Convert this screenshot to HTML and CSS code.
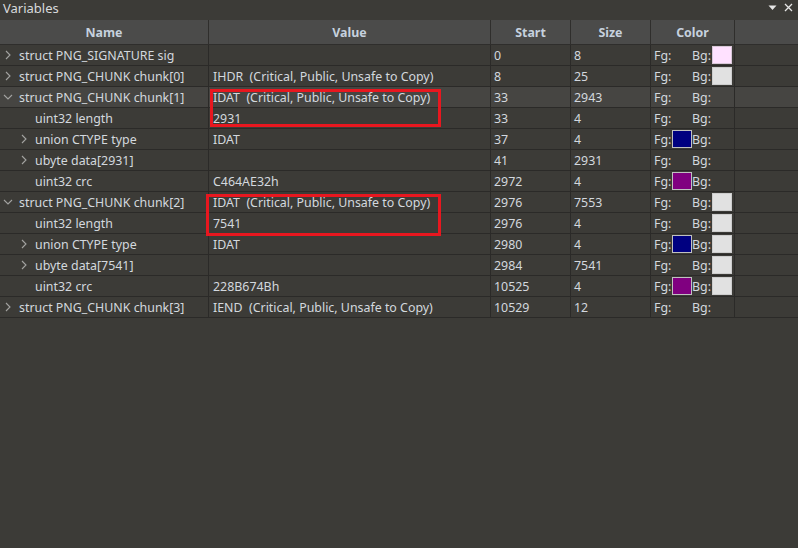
FILE: index.html
```html
<!DOCTYPE html>
<html>
<head>
<meta charset="utf-8">
<link rel="stylesheet" href="styles.css">
</head>
<body>
<div class="panel">
  <div class="titlebar">
    <span class="title">Variables</span>
    <span class="tools">
      <svg class="ico" width="9" height="9" viewBox="0 0 9 9"><path d="M0.5 2.5 L8.5 2.5 L4.5 7 Z" fill="#e6e6e6"/></svg>
      <svg class="ico" width="9" height="9" viewBox="0 0 9 9"><path d="M1 1 L8 8 M8 1 L1 8" stroke="#e6e6e6" stroke-width="1.3"/></svg>
    </span>
  </div>
  <div class="grid">
    <div class="row head">
      <div class="c name">Name</div><div class="c value">Value</div><div class="c start">Start</div><div class="c size">Size</div><div class="c color">Color</div><div class="c rest"></div>
    </div>
    <div class="row">
      <div class="c name l0"><svg class="chev" viewBox="0 0 10 10"><path d="M3 1 L7 5 L3 9"/></svg>struct PNG_SIGNATURE sig</div><div class="c value"></div><div class="c start">0</div><div class="c size">8</div><div class="c color"><span class="lab">Fg:</span><i class="slot"></i><span class="lab">Bg:</span><i class="slot sw pink"></i></div><div class="c rest"></div>
    </div>
    <div class="row">
      <div class="c name l0"><svg class="chev" viewBox="0 0 10 10"><path d="M3 1 L7 5 L3 9"/></svg>struct PNG_CHUNK chunk[0]</div><div class="c value">IHDR&nbsp; (Critical, Public, Unsafe to Copy)</div><div class="c start">8</div><div class="c size">25</div><div class="c color"><span class="lab">Fg:</span><i class="slot"></i><span class="lab">Bg:</span><i class="slot sw grey"></i></div><div class="c rest"></div>
    </div>
    <div class="row sel">
      <div class="c name l0"><svg class="chev" viewBox="0 0 10 10"><path d="M1 3 L5 7 L9 3"/></svg>struct PNG_CHUNK chunk[1]</div><div class="c value">IDAT&nbsp; (Critical, Public, Unsafe to Copy)</div><div class="c start">33</div><div class="c size">2943</div><div class="c color"><span class="lab">Fg:</span><i class="slot"></i><span class="lab">Bg:</span><i class="slot"></i></div><div class="c rest"></div>
    </div>
    <div class="row">
      <div class="c name l1"><span class="nochev"></span>uint32 length</div><div class="c value">2931</div><div class="c start">33</div><div class="c size">4</div><div class="c color"><span class="lab">Fg:</span><i class="slot"></i><span class="lab">Bg:</span><i class="slot"></i></div><div class="c rest"></div>
    </div>
    <div class="row">
      <div class="c name l1"><svg class="chev" viewBox="0 0 10 10"><path d="M3 1 L7 5 L3 9"/></svg>union CTYPE type</div><div class="c value">IDAT</div><div class="c start">37</div><div class="c size">4</div><div class="c color"><span class="lab">Fg:</span><i class="slot sw navy"></i><span class="lab">Bg:</span><i class="slot"></i></div><div class="c rest"></div>
    </div>
    <div class="row">
      <div class="c name l1"><svg class="chev" viewBox="0 0 10 10"><path d="M3 1 L7 5 L3 9"/></svg>ubyte data[2931]</div><div class="c value"></div><div class="c start">41</div><div class="c size">2931</div><div class="c color"><span class="lab">Fg:</span><i class="slot"></i><span class="lab">Bg:</span><i class="slot"></i></div><div class="c rest"></div>
    </div>
    <div class="row">
      <div class="c name l1"><span class="nochev"></span>uint32 crc</div><div class="c value">C464AE32h</div><div class="c start">2972</div><div class="c size">4</div><div class="c color"><span class="lab">Fg:</span><i class="slot sw purple"></i><span class="lab">Bg:</span><i class="slot"></i></div><div class="c rest"></div>
    </div>
    <div class="row">
      <div class="c name l0"><svg class="chev" viewBox="0 0 10 10"><path d="M1 3 L5 7 L9 3"/></svg>struct PNG_CHUNK chunk[2]</div><div class="c value">IDAT&nbsp; (Critical, Public, Unsafe to Copy)</div><div class="c start">2976</div><div class="c size">7553</div><div class="c color"><span class="lab">Fg:</span><i class="slot"></i><span class="lab">Bg:</span><i class="slot sw grey"></i></div><div class="c rest"></div>
    </div>
    <div class="row">
      <div class="c name l1"><span class="nochev"></span>uint32 length</div><div class="c value">7541</div><div class="c start">2976</div><div class="c size">4</div><div class="c color"><span class="lab">Fg:</span><i class="slot"></i><span class="lab">Bg:</span><i class="slot sw grey"></i></div><div class="c rest"></div>
    </div>
    <div class="row">
      <div class="c name l1"><svg class="chev" viewBox="0 0 10 10"><path d="M3 1 L7 5 L3 9"/></svg>union CTYPE type</div><div class="c value">IDAT</div><div class="c start">2980</div><div class="c size">4</div><div class="c color"><span class="lab">Fg:</span><i class="slot sw navy"></i><span class="lab">Bg:</span><i class="slot sw grey"></i></div><div class="c rest"></div>
    </div>
    <div class="row">
      <div class="c name l1"><svg class="chev" viewBox="0 0 10 10"><path d="M3 1 L7 5 L3 9"/></svg>ubyte data[7541]</div><div class="c value"></div><div class="c start">2984</div><div class="c size">7541</div><div class="c color"><span class="lab">Fg:</span><i class="slot"></i><span class="lab">Bg:</span><i class="slot sw grey"></i></div><div class="c rest"></div>
    </div>
    <div class="row">
      <div class="c name l1"><span class="nochev"></span>uint32 crc</div><div class="c value">228B674Bh</div><div class="c start">10525</div><div class="c size">4</div><div class="c color"><span class="lab">Fg:</span><i class="slot sw purple"></i><span class="lab">Bg:</span><i class="slot sw grey"></i></div><div class="c rest"></div>
    </div>
    <div class="row">
      <div class="c name l0"><svg class="chev" viewBox="0 0 10 10"><path d="M3 1 L7 5 L3 9"/></svg>struct PNG_CHUNK chunk[3]</div><div class="c value">IEND&nbsp; (Critical, Public, Unsafe to Copy)</div><div class="c start">10529</div><div class="c size">12</div><div class="c color"><span class="lab">Fg:</span><i class="slot"></i><span class="lab">Bg:</span><i class="slot"></i></div><div class="c rest"></div>
    </div>
    <div class="mark mark1"></div>
    <div class="mark mark2"></div>
  </div>
</div>
</body>
</html>
```

FILE: styles.css
```css
html, body {
  margin: 0;
  padding: 0;
  background: #3c3b37;
}
body {
  width: 798px;
  height: 548px;
  overflow: hidden;
  font-family: "Noto Sans", "Open Sans", "DejaVu Sans", sans-serif;
  font-size: 12.4px;
  color: #d3d8de;
}
.panel {
  display: flex;
  flex-direction: column;
}
.titlebar {
  height: 20px;
  display: flex;
  align-items: center;
  justify-content: space-between;
  padding: 0 5px 0 3px;
  color: #d8dadc;
  font-size: 13px;
}
.title {
  line-height: 16px;
  margin-top: -5px;
}
.tools {
  display: flex;
  gap: 7px;
  margin-top: -5px;
}
.ico { display: block; }
.grid {
  position: relative;
  display: flex;
  flex-direction: column;
}
.row {
  display: grid;
  grid-template-columns: 209px 282px 80px 80px 84px 1fr;
  height: 21px;
}
.c {
  border-right: 1px solid #2b2a28;
  border-bottom: 1px solid #2b2a28;
  display: flex;
  align-items: center;
  white-space: nowrap;
  overflow: hidden;
  padding-left: 3px;
  padding-top: 2px;
  line-height: 18px;
  box-sizing: border-box;
}
.c.rest { border-right: none; }
.head {
  height: 25px;
  background: #4b4b4a;
}
.head .c {
  justify-content: center;
  padding-left: 0;
  padding-top: 2px;
  font-weight: bold;
  color: #c6d1de;
  border-bottom-color: #2f2e2c;
  border-right-color: #2f2e2c;
}
.head .c.rest {
  border-right: none;
}
.sel { background: #464542; }
.name.l0 { padding-left: 3px; }
.name.l1 { padding-left: 19px; }
.chev {
  width: 10px;
  height: 10px;
  margin-right: 6px;
  margin-top: -2px;
  flex: none;
  fill: none;
  stroke: #a3a3a1;
  stroke-width: 1.1;
}
.nochev {
  width: 16px;
  flex: none;
}
.value { padding-left: 4px; }
.start, .size { padding-left: 3px; }
.color { padding-left: 3px; padding-top: 0; }
.color .lab { padding-top: 2px; }
.color .lab:first-child { width: 18px; }
.color .lab:nth-child(3) { width: 20px; }
.slot {
  display: block;
  width: 20px;
  height: 18px;
  box-sizing: border-box;
  flex: none;
}
.sw { border: 1px solid #b8b8b8; }
.sw.pink { background: #ffe1ff; border-color: #d8c8d8; }
.sw.grey { background: #e1e1e1; border-color: #cdcdcd; }
.sw.navy { background: #000080; border-color: #c0c0c0; }
.sw.purple { background: #800080; border-color: #c0c0c0; }
.mark {
  position: absolute;
  border: 3px solid #e8171f;
  box-sizing: border-box;
  pointer-events: none;
}
.mark1 { left: 210px; top: 69px; width: 231px; height: 38px; }
.mark2 { left: 206px; top: 174px; width: 235px; height: 42px; }
```
